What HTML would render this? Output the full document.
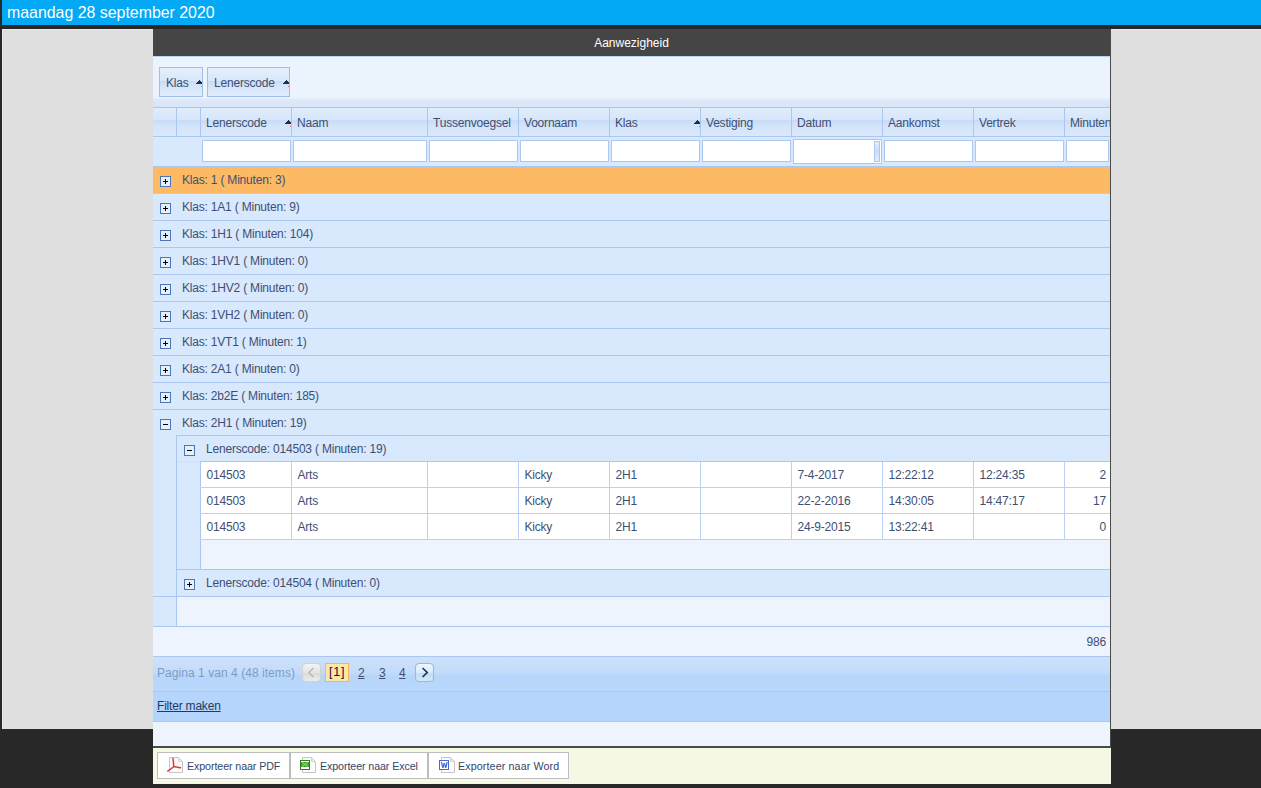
<!DOCTYPE html>
<html><head><meta charset="utf-8"><title>Aanwezigheid</title>
<style>
html,body{margin:0;padding:0;}
body{width:1261px;height:788px;position:relative;overflow:hidden;background:#282828;font-family:"Liberation Sans", sans-serif;}
.t{position:absolute;white-space:nowrap;line-height:1;font-family:"Liberation Sans", sans-serif;letter-spacing:-0.2px}
u{text-decoration:underline;}
</style></head><body>
<div style="position:absolute;left:2px;top:0px;width:1259px;height:25px;background:#03a9f4"></div>
<div class="t" style="left:7px;top:4.54px;font-size:15.9px;color:#ffffff;letter-spacing:0px">maandag 28 september 2020</div>
<div style="position:absolute;left:2px;top:29px;width:1259px;height:700px;background:#dfdfdf;border-top:1px solid #eaeaea;border-left:1px solid #eaeaea;box-sizing:border-box"></div>
<div style="position:absolute;left:153px;top:29px;width:957px;height:27px;background:#454545"></div>
<div class="t" style="left:153px;width:957px;text-align:center;top:36.842px;font-size:12px;color:#fff;letter-spacing:0px">Aanwezigheid</div>
<div style="position:absolute;left:0;top:0;width:1110px;height:746px;overflow:hidden">
<div style="position:absolute;left:153px;top:56px;width:957px;height:51px;background:linear-gradient(to bottom,#b9d2f5 0px,#b9d2f5 1px,#ebf3fd 1px,#ebf3fd 42px,#dfeaf8 43px,#d6e5f8 51px)"></div>
<div style="position:absolute;left:159px;top:67px;width:44px;height:30px;box-sizing:border-box;border:1px solid #9fbfe8;background:linear-gradient(to bottom,#e6effc 0px,#d8e7fa 12.5px,#c8dcf7 13.5px,#d4e5f9 18px,#e3edfc 30px)"></div>
<div class="t" style="left:166px;top:76.84px;font-size:12px;color:#3f4f72;">Klas</div>
<div style="position:absolute;left:199px;top:80px;width:1px;height:1px;background:#1f2f4c"></div>
<div style="position:absolute;left:198px;top:81px;width:3px;height:1px;background:#1f2f4c"></div>
<div style="position:absolute;left:197px;top:82px;width:5px;height:1px;background:#1f2f4c"></div>
<div style="position:absolute;left:196px;top:83px;width:6px;height:1px;background:#1f2f4c"></div>
<div style="position:absolute;left:201px;top:86px;width:1px;height:1px;background:#f07070"></div>
<div style="position:absolute;left:207px;top:67px;width:83px;height:30px;box-sizing:border-box;border:1px solid #9fbfe8;background:linear-gradient(to bottom,#e6effc 0px,#d8e7fa 12.5px,#c8dcf7 13.5px,#d4e5f9 18px,#e3edfc 30px)"></div>
<div class="t" style="left:214px;top:76.84px;font-size:12px;color:#3f4f72;">Lenerscode</div>
<div style="position:absolute;left:286px;top:80px;width:1px;height:1px;background:#1f2f4c"></div>
<div style="position:absolute;left:285px;top:81px;width:3px;height:1px;background:#1f2f4c"></div>
<div style="position:absolute;left:284px;top:82px;width:5px;height:1px;background:#1f2f4c"></div>
<div style="position:absolute;left:283px;top:83px;width:6px;height:1px;background:#1f2f4c"></div>
<div style="position:absolute;left:288px;top:86px;width:1px;height:1px;background:#f07070"></div>
<div style="position:absolute;left:153px;top:107px;width:957px;height:30px;background:linear-gradient(to bottom,#e2edfc 0px,#d6e6fa 12.5px,#c8dcf7 13.5px,#d2e3f9 18px,#dde9fb 30px)"></div>
<div style="position:absolute;left:153px;top:107px;width:957px;height:1px;background:#a9c7f0"></div>
<div style="position:absolute;left:153px;top:136px;width:957px;height:1px;background:#a9c7f0"></div>
<div style="position:absolute;left:176px;top:107px;width:1px;height:30px;background:#a9c7f0"></div>
<div style="position:absolute;left:200px;top:107px;width:1px;height:30px;background:#a9c7f0"></div>
<div style="position:absolute;left:291px;top:107px;width:1px;height:30px;background:#a9c7f0"></div>
<div style="position:absolute;left:427px;top:107px;width:1px;height:30px;background:#a9c7f0"></div>
<div style="position:absolute;left:518px;top:107px;width:1px;height:30px;background:#a9c7f0"></div>
<div style="position:absolute;left:609px;top:107px;width:1px;height:30px;background:#a9c7f0"></div>
<div style="position:absolute;left:700px;top:107px;width:1px;height:30px;background:#a9c7f0"></div>
<div style="position:absolute;left:791px;top:107px;width:1px;height:30px;background:#a9c7f0"></div>
<div style="position:absolute;left:882px;top:107px;width:1px;height:30px;background:#a9c7f0"></div>
<div style="position:absolute;left:973px;top:107px;width:1px;height:30px;background:#a9c7f0"></div>
<div style="position:absolute;left:1064px;top:107px;width:1px;height:30px;background:#a9c7f0"></div>
<div class="t" style="left:206px;top:116.84px;font-size:12px;color:#3f4f72;">Lenerscode</div>
<div class="t" style="left:297px;top:116.84px;font-size:12px;color:#3f4f72;">Naam</div>
<div class="t" style="left:433px;top:116.84px;font-size:12px;color:#3f4f72;">Tussenvoegsel</div>
<div class="t" style="left:524px;top:116.84px;font-size:12px;color:#3f4f72;">Voornaam</div>
<div class="t" style="left:615px;top:116.84px;font-size:12px;color:#3f4f72;">Klas</div>
<div class="t" style="left:706px;top:116.84px;font-size:12px;color:#3f4f72;">Vestiging</div>
<div class="t" style="left:797px;top:116.84px;font-size:12px;color:#3f4f72;">Datum</div>
<div class="t" style="left:888px;top:116.84px;font-size:12px;color:#3f4f72;">Aankomst</div>
<div class="t" style="left:979px;top:116.84px;font-size:12px;color:#3f4f72;">Vertrek</div>
<div class="t" style="left:1070px;top:116.84px;font-size:12px;color:#3f4f72;">Minuten</div>
<div style="position:absolute;left:288px;top:120px;width:1px;height:1px;background:#1f2f4c"></div>
<div style="position:absolute;left:287px;top:121px;width:3px;height:1px;background:#1f2f4c"></div>
<div style="position:absolute;left:286px;top:122px;width:5px;height:1px;background:#1f2f4c"></div>
<div style="position:absolute;left:285px;top:123px;width:6px;height:1px;background:#1f2f4c"></div>
<div style="position:absolute;left:290px;top:126px;width:1px;height:1px;background:#f07070"></div>
<div style="position:absolute;left:697px;top:120px;width:1px;height:1px;background:#1f2f4c"></div>
<div style="position:absolute;left:696px;top:121px;width:3px;height:1px;background:#1f2f4c"></div>
<div style="position:absolute;left:695px;top:122px;width:5px;height:1px;background:#1f2f4c"></div>
<div style="position:absolute;left:694px;top:123px;width:6px;height:1px;background:#1f2f4c"></div>
<div style="position:absolute;left:699px;top:126px;width:1px;height:1px;background:#f07070"></div>
<div style="position:absolute;left:153px;top:137px;width:957px;height:29px;background:#d8e8fd"></div>
<div style="position:absolute;left:153px;top:166px;width:957px;height:1px;background:#a9c7f0"></div>
<div style="position:absolute;left:202px;top:140px;width:89px;height:22px;box-sizing:border-box;border:1px solid #a9c7f0;background:#fff"></div>
<div style="position:absolute;left:293px;top:140px;width:134px;height:22px;box-sizing:border-box;border:1px solid #a9c7f0;background:#fff"></div>
<div style="position:absolute;left:429px;top:140px;width:89px;height:22px;box-sizing:border-box;border:1px solid #a9c7f0;background:#fff"></div>
<div style="position:absolute;left:520px;top:140px;width:89px;height:22px;box-sizing:border-box;border:1px solid #a9c7f0;background:#fff"></div>
<div style="position:absolute;left:611px;top:140px;width:89px;height:22px;box-sizing:border-box;border:1px solid #a9c7f0;background:#fff"></div>
<div style="position:absolute;left:702px;top:140px;width:89px;height:22px;box-sizing:border-box;border:1px solid #a9c7f0;background:#fff"></div>
<div style="position:absolute;left:793px;top:139px;width:89px;height:25px;box-sizing:border-box;border:1px solid #a9c7f0;background:#fff"></div>
<div style="position:absolute;left:874px;top:141px;width:6px;height:21px;box-sizing:border-box;border:1px solid #a9c7f0;background:linear-gradient(#e4eefc,#c9ddf8 50%,#e4eefc)"></div>
<div style="position:absolute;left:884px;top:140px;width:89px;height:22px;box-sizing:border-box;border:1px solid #a9c7f0;background:#fff"></div>
<div style="position:absolute;left:975px;top:140px;width:89px;height:22px;box-sizing:border-box;border:1px solid #a9c7f0;background:#fff"></div>
<div style="position:absolute;left:1066px;top:140px;width:43px;height:22px;box-sizing:border-box;border:1px solid #a9c7f0;background:#fff"></div>
<div style="position:absolute;left:153px;top:167px;width:957px;height:26px;background:#fdb964"></div>
<div style="position:absolute;left:153px;top:193px;width:957px;height:1px;background:#b3cff3"></div>
<div style="position:absolute;left:160px;top:176px;width:11px;height:11px;box-sizing:border-box;border:1px solid #4c77b4;background:#e6effc"><div style="position:absolute;left:2px;top:4px;width:5px;height:1px;background:#000"></div><div style="position:absolute;left:4px;top:2px;width:1px;height:5px;background:#000"></div></div>
<div class="t" style="left:182px;top:173.84px;font-size:12px;color:#3f4f72;letter-spacing:-0.2px">Klas: 1 ( Minuten: 3)</div>
<div style="position:absolute;left:153px;top:194px;width:957px;height:26px;background:#d8e8fd"></div>
<div style="position:absolute;left:153px;top:220px;width:957px;height:1px;background:#a9c7f0"></div>
<div style="position:absolute;left:160px;top:203px;width:11px;height:11px;box-sizing:border-box;border:1px solid #4c77b4;background:#e6effc"><div style="position:absolute;left:2px;top:4px;width:5px;height:1px;background:#000"></div><div style="position:absolute;left:4px;top:2px;width:1px;height:5px;background:#000"></div></div>
<div class="t" style="left:182px;top:200.84px;font-size:12px;color:#3f4f72;letter-spacing:-0.2px">Klas: 1A1 ( Minuten: 9)</div>
<div style="position:absolute;left:153px;top:221px;width:957px;height:26px;background:#d8e8fd"></div>
<div style="position:absolute;left:153px;top:247px;width:957px;height:1px;background:#a9c7f0"></div>
<div style="position:absolute;left:160px;top:230px;width:11px;height:11px;box-sizing:border-box;border:1px solid #4c77b4;background:#e6effc"><div style="position:absolute;left:2px;top:4px;width:5px;height:1px;background:#000"></div><div style="position:absolute;left:4px;top:2px;width:1px;height:5px;background:#000"></div></div>
<div class="t" style="left:182px;top:227.84px;font-size:12px;color:#3f4f72;letter-spacing:-0.2px">Klas: 1H1 ( Minuten: 104)</div>
<div style="position:absolute;left:153px;top:248px;width:957px;height:26px;background:#d8e8fd"></div>
<div style="position:absolute;left:153px;top:274px;width:957px;height:1px;background:#a9c7f0"></div>
<div style="position:absolute;left:160px;top:257px;width:11px;height:11px;box-sizing:border-box;border:1px solid #4c77b4;background:#e6effc"><div style="position:absolute;left:2px;top:4px;width:5px;height:1px;background:#000"></div><div style="position:absolute;left:4px;top:2px;width:1px;height:5px;background:#000"></div></div>
<div class="t" style="left:182px;top:254.84px;font-size:12px;color:#3f4f72;letter-spacing:-0.2px">Klas: 1HV1 ( Minuten: 0)</div>
<div style="position:absolute;left:153px;top:275px;width:957px;height:26px;background:#d8e8fd"></div>
<div style="position:absolute;left:153px;top:301px;width:957px;height:1px;background:#a9c7f0"></div>
<div style="position:absolute;left:160px;top:284px;width:11px;height:11px;box-sizing:border-box;border:1px solid #4c77b4;background:#e6effc"><div style="position:absolute;left:2px;top:4px;width:5px;height:1px;background:#000"></div><div style="position:absolute;left:4px;top:2px;width:1px;height:5px;background:#000"></div></div>
<div class="t" style="left:182px;top:281.84px;font-size:12px;color:#3f4f72;letter-spacing:-0.2px">Klas: 1HV2 ( Minuten: 0)</div>
<div style="position:absolute;left:153px;top:302px;width:957px;height:26px;background:#d8e8fd"></div>
<div style="position:absolute;left:153px;top:328px;width:957px;height:1px;background:#a9c7f0"></div>
<div style="position:absolute;left:160px;top:311px;width:11px;height:11px;box-sizing:border-box;border:1px solid #4c77b4;background:#e6effc"><div style="position:absolute;left:2px;top:4px;width:5px;height:1px;background:#000"></div><div style="position:absolute;left:4px;top:2px;width:1px;height:5px;background:#000"></div></div>
<div class="t" style="left:182px;top:308.84px;font-size:12px;color:#3f4f72;letter-spacing:-0.2px">Klas: 1VH2 ( Minuten: 0)</div>
<div style="position:absolute;left:153px;top:329px;width:957px;height:26px;background:#d8e8fd"></div>
<div style="position:absolute;left:153px;top:355px;width:957px;height:1px;background:#a9c7f0"></div>
<div style="position:absolute;left:160px;top:338px;width:11px;height:11px;box-sizing:border-box;border:1px solid #4c77b4;background:#e6effc"><div style="position:absolute;left:2px;top:4px;width:5px;height:1px;background:#000"></div><div style="position:absolute;left:4px;top:2px;width:1px;height:5px;background:#000"></div></div>
<div class="t" style="left:182px;top:335.84px;font-size:12px;color:#3f4f72;letter-spacing:-0.2px">Klas: 1VT1 ( Minuten: 1)</div>
<div style="position:absolute;left:153px;top:356px;width:957px;height:26px;background:#d8e8fd"></div>
<div style="position:absolute;left:153px;top:382px;width:957px;height:1px;background:#a9c7f0"></div>
<div style="position:absolute;left:160px;top:365px;width:11px;height:11px;box-sizing:border-box;border:1px solid #4c77b4;background:#e6effc"><div style="position:absolute;left:2px;top:4px;width:5px;height:1px;background:#000"></div><div style="position:absolute;left:4px;top:2px;width:1px;height:5px;background:#000"></div></div>
<div class="t" style="left:182px;top:362.84px;font-size:12px;color:#3f4f72;letter-spacing:-0.2px">Klas: 2A1 ( Minuten: 0)</div>
<div style="position:absolute;left:153px;top:383px;width:957px;height:26px;background:#d8e8fd"></div>
<div style="position:absolute;left:153px;top:409px;width:957px;height:1px;background:#a9c7f0"></div>
<div style="position:absolute;left:160px;top:392px;width:11px;height:11px;box-sizing:border-box;border:1px solid #4c77b4;background:#e6effc"><div style="position:absolute;left:2px;top:4px;width:5px;height:1px;background:#000"></div><div style="position:absolute;left:4px;top:2px;width:1px;height:5px;background:#000"></div></div>
<div class="t" style="left:182px;top:389.84px;font-size:12px;color:#3f4f72;letter-spacing:-0.2px">Klas: 2b2E ( Minuten: 185)</div>
<div style="position:absolute;left:153px;top:410px;width:957px;height:25px;background:#d8e8fd"></div>
<div style="position:absolute;left:160px;top:419px;width:11px;height:11px;box-sizing:border-box;border:1px solid #4c77b4;background:#e6effc"><div style="position:absolute;left:2px;top:4px;width:5px;height:1px;background:#000"></div></div>
<div class="t" style="left:182px;top:416.84px;font-size:12px;color:#3f4f72;letter-spacing:-0.2px">Klas: 2H1 ( Minuten: 19)</div>
<div style="position:absolute;left:153px;top:435px;width:23px;height:161px;background:#d8e8fd"></div>
<div style="position:absolute;left:176px;top:435px;width:1px;height:162px;background:#a9c7f0"></div>
<div style="position:absolute;left:176px;top:435px;width:934px;height:1px;background:#a9c7f0"></div>
<div style="position:absolute;left:177px;top:436px;width:933px;height:25px;background:#d8e8fd"></div>
<div style="position:absolute;left:184px;top:445px;width:11px;height:11px;box-sizing:border-box;border:1px solid #4c77b4;background:#e6effc"><div style="position:absolute;left:2px;top:4px;width:5px;height:1px;background:#000"></div></div>
<div class="t" style="left:206px;top:442.84px;font-size:12px;color:#3f4f72;letter-spacing:-0.2px">Lenerscode: 014503 ( Minuten: 19)</div>
<div style="position:absolute;left:200px;top:461px;width:910px;height:1px;background:#a9c7f0"></div>
<div style="position:absolute;left:177px;top:462px;width:23px;height:107px;background:#d8e8fd"></div>
<div style="position:absolute;left:200px;top:461px;width:1px;height:108px;background:#a9c7f0"></div>
<div style="position:absolute;left:201px;top:462px;width:909px;height:25px;background:#fff"></div>
<div style="position:absolute;left:200px;top:487px;width:910px;height:1px;background:#b7d2f4"></div>
<div style="position:absolute;left:291px;top:462px;width:1px;height:25px;background:#b7d2f4"></div>
<div style="position:absolute;left:427px;top:462px;width:1px;height:25px;background:#b7d2f4"></div>
<div style="position:absolute;left:518px;top:462px;width:1px;height:25px;background:#b7d2f4"></div>
<div style="position:absolute;left:609px;top:462px;width:1px;height:25px;background:#b7d2f4"></div>
<div style="position:absolute;left:700px;top:462px;width:1px;height:25px;background:#b7d2f4"></div>
<div style="position:absolute;left:791px;top:462px;width:1px;height:25px;background:#b7d2f4"></div>
<div style="position:absolute;left:882px;top:462px;width:1px;height:25px;background:#b7d2f4"></div>
<div style="position:absolute;left:973px;top:462px;width:1px;height:25px;background:#b7d2f4"></div>
<div style="position:absolute;left:1064px;top:462px;width:1px;height:25px;background:#b7d2f4"></div>
<div class="t" style="left:206.5px;top:468.84px;font-size:12px;color:#3f4f72;">014503</div>
<div class="t" style="left:297.5px;top:468.84px;font-size:12px;color:#3f4f72;">Arts</div>
<div class="t" style="left:524.5px;top:468.84px;font-size:12px;color:#3f4f72;">Kicky</div>
<div class="t" style="left:615.5px;top:468.84px;font-size:12px;color:#3f4f72;">2H1</div>
<div class="t" style="left:797.5px;top:468.84px;font-size:12px;color:#3f4f72;">7-4-2017</div>
<div class="t" style="left:888.5px;top:468.84px;font-size:12px;color:#3f4f72;">12:22:12</div>
<div class="t" style="left:979.5px;top:468.84px;font-size:12px;color:#3f4f72;">12:24:35</div>
<div class="t" style="left:906px;width:200px;text-align:right;top:468.84px;font-size:12px;color:#3f4f72;">2</div>
<div style="position:absolute;left:201px;top:488px;width:909px;height:25px;background:#fff"></div>
<div style="position:absolute;left:200px;top:513px;width:910px;height:1px;background:#b7d2f4"></div>
<div style="position:absolute;left:291px;top:488px;width:1px;height:25px;background:#b7d2f4"></div>
<div style="position:absolute;left:427px;top:488px;width:1px;height:25px;background:#b7d2f4"></div>
<div style="position:absolute;left:518px;top:488px;width:1px;height:25px;background:#b7d2f4"></div>
<div style="position:absolute;left:609px;top:488px;width:1px;height:25px;background:#b7d2f4"></div>
<div style="position:absolute;left:700px;top:488px;width:1px;height:25px;background:#b7d2f4"></div>
<div style="position:absolute;left:791px;top:488px;width:1px;height:25px;background:#b7d2f4"></div>
<div style="position:absolute;left:882px;top:488px;width:1px;height:25px;background:#b7d2f4"></div>
<div style="position:absolute;left:973px;top:488px;width:1px;height:25px;background:#b7d2f4"></div>
<div style="position:absolute;left:1064px;top:488px;width:1px;height:25px;background:#b7d2f4"></div>
<div class="t" style="left:206.5px;top:494.84px;font-size:12px;color:#3f4f72;">014503</div>
<div class="t" style="left:297.5px;top:494.84px;font-size:12px;color:#3f4f72;">Arts</div>
<div class="t" style="left:524.5px;top:494.84px;font-size:12px;color:#3f4f72;">Kicky</div>
<div class="t" style="left:615.5px;top:494.84px;font-size:12px;color:#3f4f72;">2H1</div>
<div class="t" style="left:797.5px;top:494.84px;font-size:12px;color:#3f4f72;">22-2-2016</div>
<div class="t" style="left:888.5px;top:494.84px;font-size:12px;color:#3f4f72;">14:30:05</div>
<div class="t" style="left:979.5px;top:494.84px;font-size:12px;color:#3f4f72;">14:47:17</div>
<div class="t" style="left:906px;width:200px;text-align:right;top:494.84px;font-size:12px;color:#3f4f72;">17</div>
<div style="position:absolute;left:201px;top:514px;width:909px;height:25px;background:#fff"></div>
<div style="position:absolute;left:200px;top:539px;width:910px;height:1px;background:#b7d2f4"></div>
<div style="position:absolute;left:291px;top:514px;width:1px;height:25px;background:#b7d2f4"></div>
<div style="position:absolute;left:427px;top:514px;width:1px;height:25px;background:#b7d2f4"></div>
<div style="position:absolute;left:518px;top:514px;width:1px;height:25px;background:#b7d2f4"></div>
<div style="position:absolute;left:609px;top:514px;width:1px;height:25px;background:#b7d2f4"></div>
<div style="position:absolute;left:700px;top:514px;width:1px;height:25px;background:#b7d2f4"></div>
<div style="position:absolute;left:791px;top:514px;width:1px;height:25px;background:#b7d2f4"></div>
<div style="position:absolute;left:882px;top:514px;width:1px;height:25px;background:#b7d2f4"></div>
<div style="position:absolute;left:973px;top:514px;width:1px;height:25px;background:#b7d2f4"></div>
<div style="position:absolute;left:1064px;top:514px;width:1px;height:25px;background:#b7d2f4"></div>
<div class="t" style="left:206.5px;top:520.84px;font-size:12px;color:#3f4f72;">014503</div>
<div class="t" style="left:297.5px;top:520.84px;font-size:12px;color:#3f4f72;">Arts</div>
<div class="t" style="left:524.5px;top:520.84px;font-size:12px;color:#3f4f72;">Kicky</div>
<div class="t" style="left:615.5px;top:520.84px;font-size:12px;color:#3f4f72;">2H1</div>
<div class="t" style="left:797.5px;top:520.84px;font-size:12px;color:#3f4f72;">24-9-2015</div>
<div class="t" style="left:888.5px;top:520.84px;font-size:12px;color:#3f4f72;">13:22:41</div>
<div class="t" style="left:906px;width:200px;text-align:right;top:520.84px;font-size:12px;color:#3f4f72;">0</div>
<div style="position:absolute;left:201px;top:540px;width:909px;height:29px;background:#eef4fd"></div>
<div style="position:absolute;left:176px;top:569px;width:934px;height:1px;background:#a9c7f0"></div>
<div style="position:absolute;left:177px;top:570px;width:933px;height:26px;background:#d8e8fd"></div>
<div style="position:absolute;left:184px;top:579px;width:11px;height:11px;box-sizing:border-box;border:1px solid #4c77b4;background:#e6effc"><div style="position:absolute;left:2px;top:4px;width:5px;height:1px;background:#000"></div><div style="position:absolute;left:4px;top:2px;width:1px;height:5px;background:#000"></div></div>
<div class="t" style="left:206px;top:576.84px;font-size:12px;color:#3f4f72;letter-spacing:-0.2px">Lenerscode: 014504 ( Minuten: 0)</div>
<div style="position:absolute;left:153px;top:596px;width:957px;height:1px;background:#a9c7f0"></div>
<div style="position:absolute;left:153px;top:597px;width:23px;height:29px;background:#d8e8fd"></div>
<div style="position:absolute;left:176px;top:597px;width:1px;height:29px;background:#a9c7f0"></div>
<div style="position:absolute;left:177px;top:597px;width:933px;height:29px;background:#eef4fd"></div>
<div style="position:absolute;left:153px;top:626px;width:957px;height:1px;background:#a9c7f0"></div>
<div style="position:absolute;left:153px;top:627px;width:957px;height:29px;background:#eef4fd"></div>
<div class="t" style="left:906px;width:200px;text-align:right;top:635.84px;font-size:12px;color:#3f4f72;">986</div>
<div style="position:absolute;left:153px;top:656px;width:957px;height:1px;background:#a9c7f0"></div>
<div style="position:absolute;left:153px;top:657px;width:957px;height:34px;background:linear-gradient(to bottom,#cde1fb 0px,#c3dbfa 16px,#b6d5fb 19px,#bbd8fb 34px)"></div>
<div class="t" style="left:157px;top:666.84px;font-size:12px;color:#7d9cc4;letter-spacing:0.05px">Pagina 1 van 4 (48 items)</div>
<div style="position:absolute;left:302px;top:663px;width:19px;height:19px;box-sizing:border-box;border:1px solid #d2d2d2;border-radius:4px;background:linear-gradient(#f4f4f4,#e4e4e4 50%,#d9d9d9 51%,#ececec)"><svg width="17" height="17" style="position:absolute;left:0;top:0"><path d="M10.5 4 L5.8 8.5 L10.5 13" stroke="#b4b4b4" stroke-width="1.2" fill="none"/></svg></div>
<div style="position:absolute;left:325px;top:663px;width:24px;height:19px;box-sizing:border-box;border:1px solid #f5b35c;background:#fde7a6"></div>
<div class="t" style="left:329px;top:666.42px;font-size:12.5px;color:#2a0a30;letter-spacing:0.8px">[1]</div>
<div class="t" style="left:358px;top:666.84px;font-size:12px;color:#3f4f72;"><u>2</u></div>
<div class="t" style="left:379px;top:666.84px;font-size:12px;color:#3f4f72;"><u>3</u></div>
<div class="t" style="left:399px;top:666.84px;font-size:12px;color:#3f4f72;"><u>4</u></div>
<div style="position:absolute;left:415px;top:663px;width:19px;height:19px;box-sizing:border-box;border:1px solid #94bcd4;border-radius:4px;background:linear-gradient(#eef6fd,#dbeafa 50%,#c0dcf5 51%,#d3e7f9)"><svg width="17" height="17" style="position:absolute;left:0;top:0"><path d="M6.6 4 L11.2 8.5 L6.6 13" stroke="#0d3868" stroke-width="1.7" fill="none"/></svg></div>
<div style="position:absolute;left:153px;top:691px;width:957px;height:1px;background:#a9c7f0"></div>
<div style="position:absolute;left:153px;top:692px;width:957px;height:29px;background:#b6d5fc"></div>
<div class="t" style="left:157px;top:699.84px;font-size:12px;color:#1e395b;"><u>Filter maken</u></div>
<div style="position:absolute;left:153px;top:721px;width:957px;height:1px;background:#a9c7f0"></div>
<div style="position:absolute;left:153px;top:722px;width:957px;height:24px;background:#eef4fd"></div>
</div>
<div style="position:absolute;left:1110px;top:29px;width:1px;height:717px;background:#4a4a4a"></div>
<div style="position:absolute;left:153px;top:746px;width:958px;height:2px;background:#4a4a4a"></div>
<div style="position:absolute;left:153px;top:748px;width:958px;height:36px;background:#f4f8e5"></div>
<div style="position:absolute;left:157px;top:752px;width:133px;height:27px;box-sizing:border-box;border:1px solid #bdbdbd;background:#fff"></div>
<svg style="position:absolute;left:167px;top:757px" width="16" height="16"><path d="M2.5 0.5 H11.5 L15.5 4.5 V15.5 H2.5 Z" fill="#fdfdfd" stroke="#c4c4c4"/><path d="M11.5 1 V4.5 H15" fill="#eee" stroke="#d6d6d6"/><path d="M6 1.5 C6.5 5 6.5 8 6.8 9.5 M6.8 9.5 C8.5 10 11 10 13.5 10.8 M6.8 9.5 C5 11 3 13 0.8 14" fill="none" stroke="#dc3a3a" stroke-width="1.5" stroke-linecap="round"/></svg>
<div class="t" style="left:187px;top:760.94px;font-size:10.7px;color:#34466a;letter-spacing:-0.1px">Exporteer naar PDF</div>
<div style="position:absolute;left:290px;top:752px;width:138px;height:27px;box-sizing:border-box;border:1px solid #bdbdbd;background:#fff"></div>
<svg style="position:absolute;left:300px;top:757px" width="18" height="16"><path d="M2.5 0.5 H11.5 L15.5 4.5 V15.5 H2.5 Z" fill="#fdfdfd" stroke="#c4c4c4"/><path d="M11.5 1 V4.5 H15" fill="#eee" stroke="#d6d6d6"/><rect x="0.5" y="3.5" width="9" height="9" fill="#fff" stroke="#2f7d1f"/><rect x="1" y="5" width="8" height="5" fill="#3f9a2a"/><path d="M2 5.5 L8 9.5 M8 5.5 L2 9.5" stroke="#8fd36a" stroke-width="1.2"/></svg>
<div class="t" style="left:320px;top:760.94px;font-size:10.7px;color:#34466a;letter-spacing:-0.1px">Exporteer naar Excel</div>
<div style="position:absolute;left:428px;top:752px;width:141px;height:27px;box-sizing:border-box;border:1px solid #bdbdbd;background:#fff"></div>
<svg style="position:absolute;left:438px;top:757px" width="18" height="16"><g transform="translate(1,0)"><path d="M2.5 0.5 H11.5 L15.5 4.5 V15.5 H2.5 Z" fill="#fdfdfd" stroke="#c4c4c4"/><path d="M11.5 1 V4.5 H15" fill="#eee" stroke="#d6d6d6"/></g><rect x="1.5" y="3.5" width="9" height="9" fill="#fff" stroke="#4468d2"/><path d="M2.8 5 L4.2 11 L5.6 11 L6.3 8 L7 11 L8.4 11 L9.8 5 L8.4 5 L7.7 8.6 L7 6 L5.6 6 L4.9 8.6 L4.2 5 Z" fill="#4a6fd6"/></svg>
<div class="t" style="left:458px;top:760.94px;font-size:10.7px;color:#34466a;letter-spacing:0.12px">Exporteer naar Word</div>
</body></html>
